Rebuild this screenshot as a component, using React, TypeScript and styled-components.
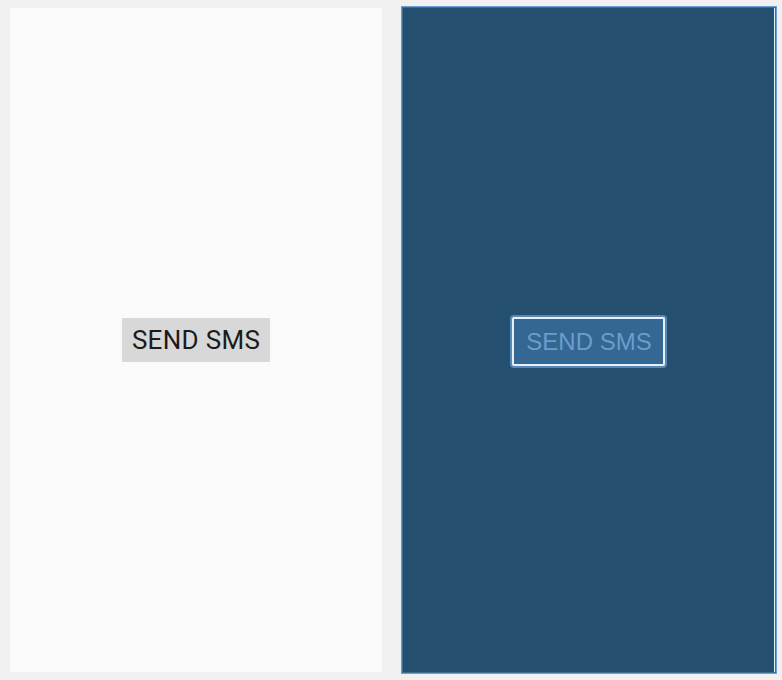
import React from "react";
import styled, { createGlobalStyle } from "styled-components";

const Global = createGlobalStyle`
  html, body { margin: 0; padding: 0; background: #f0f0f0; }
  #root { width: 782px; height: 680px; }
`;

const Page = styled.div`
  display: grid;
  grid-template-columns: 372px 372px;
  column-gap: 21px;
  padding: 8px 0 0 10px;
  height: 680px;
  box-sizing: border-box;
`;

const LightPanel = styled.div`
  height: 664px;
  background: #fafafa;
  display: flex;
  align-items: center;
  justify-content: center;
`;

const DarkPanel = styled.div`
  height: 664px;
  background: #254f6e;
  display: flex;
  align-items: center;
  justify-content: center;
  box-shadow: 0 0 0 1px #3d6e96, 0 0 0 2px #6d9ed3;
  border-right: 1px solid #e6eef8;
  box-sizing: border-box;
`;

const LightButton = styled.button`
  font-family: Roboto, "Liberation Sans", sans-serif;
  font-size: 26px;
  letter-spacing: 0.3px;
  color: #1b1b1b;
  background: #d7d8d7;
  border: none;
  border-radius: 1px;
  width: 148px;
  height: 44px;
  padding: 0;
  margin-top: 0;
`;

const DarkButton = styled.button`
  font-family: "Liberation Sans", Arial, sans-serif;
  font-size: 24px;
  color: #6b9dcd;
  background: #346792;
  border: 2px solid #e8f0fa;
  border-radius: 2px;
  width: 153px;
  height: 49px;
  padding: 0 0 0 1px;
  margin-top: 3px;
  box-shadow: 0 0 0 2px #5589bd;
`;

export default function App() {
  return (
    <>
      <Global />
      <Page>
        <LightPanel>
          <LightButton>SEND SMS</LightButton>
        </LightPanel>
        <DarkPanel>
          <DarkButton>SEND SMS</DarkButton>
        </DarkPanel>
      </Page>
    </>
  );
}
